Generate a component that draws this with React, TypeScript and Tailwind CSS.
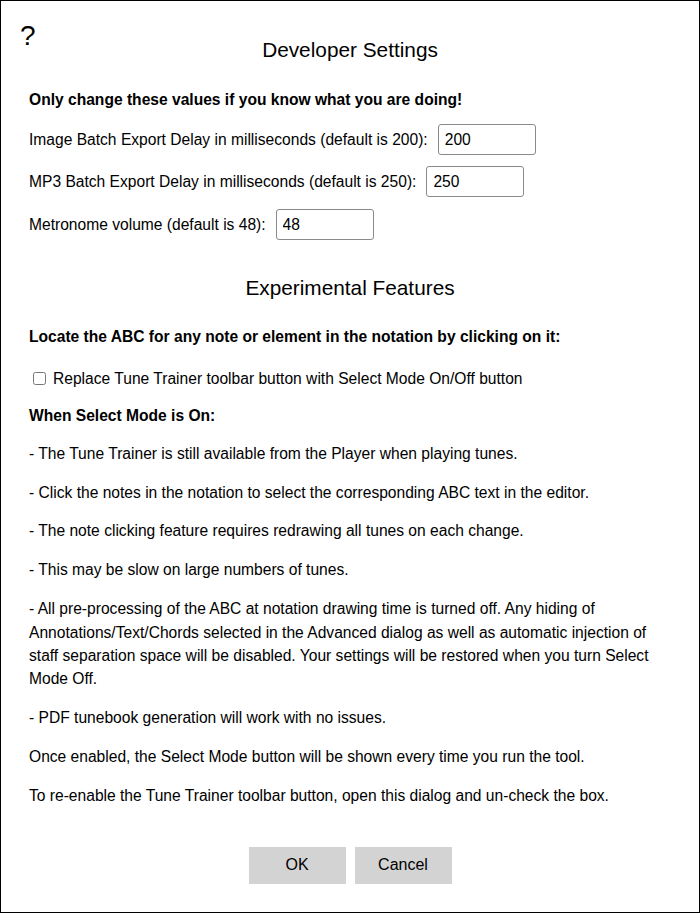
import React, { useState } from "react";

const notes: string[] = [
  "- The Tune Trainer is still available from the Player when playing tunes.",
  "- Click the notes in the notation to select the corresponding ABC text in the editor.",
  "- The note clicking feature requires redrawing all tunes on each change.",
  "- This may be slow on large numbers of tunes.",
  "- All pre-processing of the ABC at notation drawing time is turned off. Any hiding of Annotations/Text/Chords selected in the Advanced dialog as well as automatic injection of staff separation space will be disabled. Your settings will be restored when you turn Select Mode Off.",
  "- PDF tunebook generation will work with no issues.",
  "Once enabled, the Select Mode button will be shown every time you run the tool.",
  "To re-enable the Tune Trainer toolbar button, open this dialog and un-check the box.",
];

const App: React.FC = () => {
  const [imageDelay, setImageDelay] = useState("200");
  const [mp3Delay, setMp3Delay] = useState("250");
  const [volume, setVolume] = useState("48");
  const [selectMode, setSelectMode] = useState(false);

  const inputCls =
    "w-[98px] h-[31px] ml-[10px] px-[6px] border border-[#8a8a8a] rounded-[3px] text-[15.6px] text-black bg-white outline-none";

  return (
    <div
      className="relative w-[700px] h-[913px] border border-black bg-white text-black text-[15.6px] leading-[23.4px] px-[28px] flex flex-col"
      style={{ fontFamily: '"Liberation Sans", Arial, Helvetica, sans-serif' }}
    >
      <button className="absolute left-[19px] top-[18px] text-[28px] leading-[34px] text-black">?</button>

      <h1 className="mt-[37px] text-center text-[20.8px] leading-[24px]">Developer Settings</h1>

      <p className="mt-[26px] font-bold">Only change these values if you know what you are doing!</p>

      <div className="mt-[13px] flex items-center h-[31px]">
        <span>Image Batch Export Delay in milliseconds (default is 200):</span>
        <input className={inputCls} value={imageDelay} onChange={e => setImageDelay(e.target.value)} />
      </div>
      <div className="mt-[11px] flex items-center h-[31px]">
        <span>MP3 Batch Export Delay in milliseconds (default is 250):</span>
        <input className={inputCls} value={mp3Delay} onChange={e => setMp3Delay(e.target.value)} />
      </div>
      <div className="mt-[12px] flex items-center h-[31px]">
        <span>Metronome volume (default is 48):</span>
        <input className={inputCls} value={volume} onChange={e => setVolume(e.target.value)} />
      </div>

      <h2 className="mt-[36px] text-center text-[20.8px] leading-[24px]">Experimental Features</h2>

      <p className="mt-[25px] font-bold">Locate the ABC for any note or element in the notation by clicking on it:</p>

      <label className="mt-[18px] flex items-center">
        <input
          type="checkbox"
          checked={selectMode}
          onChange={e => setSelectMode(e.target.checked)}
          className="ml-[4px] mr-[7px] w-[13px] h-[13px]"
        />
        <span>Replace Tune Trainer toolbar button with Select Mode On/Off button</span>
      </label>

      <p className="mt-[14px] font-bold">When Select Mode is On:</p>

      {notes.map((n, i) => (
        <p key={i} className={i === 0 ? "mt-[14px]" : "mt-[15.5px]"}>
          {n}
        </p>
      ))}

      <div className="mt-[39px] flex justify-center gap-[9px]">
        <button className="w-[97px] h-[37px] bg-[#d3d3d3] text-[16px] text-black">OK</button>
        <button className="w-[97px] h-[37px] bg-[#d3d3d3] text-[16px] text-black">Cancel</button>
      </div>
    </div>
  );
};

export default App;
